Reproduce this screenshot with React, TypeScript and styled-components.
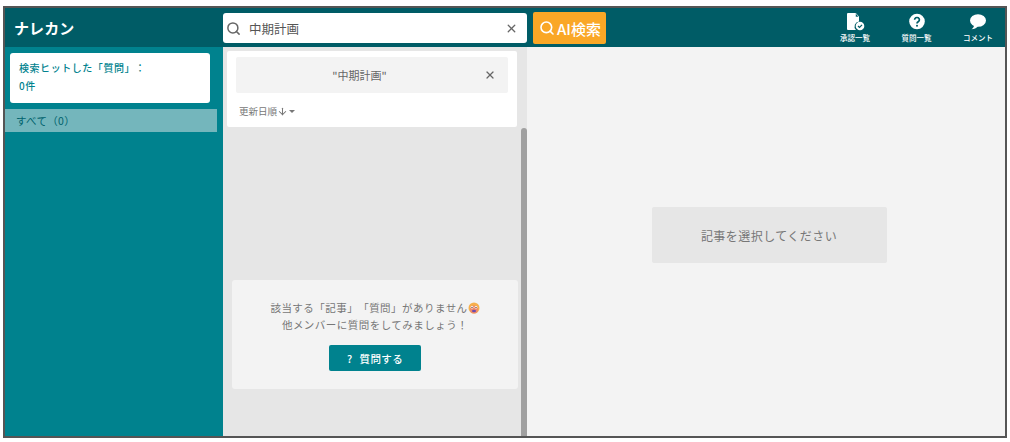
import React from "react";
import styled, { createGlobalStyle } from "styled-components";
import { Search, X, ArrowDown } from "lucide-react";

const Global = createGlobalStyle`
  html, body { margin: 0; padding: 0; background: #fff; }
  body { font-family: "Noto Sans CJK JP", "Noto Sans", sans-serif; text-spacing-trim: space-all; }
  * { box-sizing: border-box; }
`;

const Page = styled.div`
  width: 1010px;
  height: 442px;
  padding: 6px 3px 4px 3px;
  background: #fff;
`;

const Frame = styled.div`
  width: 100%;
  height: 100%;
  border: 2px solid #555;
  display: flex;
  flex-direction: column;
  overflow: hidden;
`;

const Header = styled.header`
  height: 39px;
  flex: none;
  background: #005c66;
  display: flex;
  align-items: center;
`;

const Logo = styled.div`
  width: 218px;
  padding-left: 9px;
  color: #fff;
  font-size: 15px;
  font-weight: 700;
  letter-spacing: 0.1px;
`;

const SearchBox = styled.div`
  width: 304px;
  height: 30px;
  margin-top: 1px;
  background: #fff;
  border-radius: 3px;
  display: flex;
  align-items: center;
  padding: 0 9px 0 3px;
  color: #666;
`;

const SearchText = styled.span`
  flex: 1;
  margin-left: 8px;
  font-size: 12.5px;
  color: #555;
`;

const AiButton = styled.button`
  width: 73px;
  height: 32px;
  margin: 1px 0 0 6px;
  padding: 0 0 0 6px;
  border: none;
  border-radius: 2px;
  background: #faa726;
  color: #fff;
  font-family: inherit;
  font-size: 15px;
  font-weight: 500;
  display: flex;
  align-items: center;
  gap: 2px;
  white-space: nowrap;
`;

const Nav = styled.nav`
  margin-left: auto;
  display: flex;
  gap: 21.5px;
  padding-right: 7px;
`;

const NavItem = styled.div`
  width: 40px;
  height: 39px;
  display: flex;
  flex-direction: column;
  align-items: center;
  justify-content: flex-end;
  color: #fff;
  font-size: 7.5px;
  font-weight: 500;
  line-height: 10px;
  padding-bottom: 4px;
  gap: 2px;
  white-space: nowrap;
`;

const NavIcon = styled.svg`
  width: 20px;
  height: 18px;
  display: block;
`;

const Body = styled.div`
  flex: 1;
  min-height: 0;
  display: flex;
`;

const Sidebar = styled.aside`
  width: 218px;
  flex: none;
  background: #00828e;
  padding-top: 6px;
`;

const HitCard = styled.div`
  width: 200px;
  height: 50px;
  margin-left: 5px;
  padding: 6px 9px;
  background: #fff;
  border-radius: 3px;
  color: #00828e;
  font-size: 10px;
  font-weight: 500;
  line-height: 17.500px;
  letter-spacing: 0.55px;
`;

const CategoryRow = styled.div`
  width: 212px;
  height: 23px;
  margin-top: 6px;
  padding-left: 11px;
  background: #74b6bc;
  color: #00626c;
  font-size: 10.5px;
  line-height: 23px;
  letter-spacing: 0.3px;
`;

const Middle = styled.section`
  width: 304px;
  flex: none;
  background: #e6e6e6;
  display: flex;
`;

const MiddleColumn = styled.div`
  width: 298px;
  padding: 4px 0 0 4px;
  display: flex;
  flex-direction: column;
`;

const FilterCard = styled.div`
  width: 290px;
  height: 76px;
  background: #fff;
  border-radius: 2px;
  padding: 6px 9px 0;
`;

const Chip = styled.div`
  height: 36px;
  padding-right: 25px;
  background: #f3f3f3;
  border-radius: 2px;
  display: flex;
  align-items: center;
  justify-content: center;
  position: relative;
  font-size: 11px;
  color: #666;
`;

const ChipClose = styled.span`
  position: absolute;
  right: 12px;
  top: 12px;
  display: flex;
  color: #666;
`;

const Sort = styled.div`
  margin-top: 11px;
  margin-left: 3px;
  display: flex;
  align-items: center;
  color: #777;
  font-size: 9.5px;
  line-height: 14px;
`;

const Caret = styled.span`
  width: 0;
  height: 0;
  margin-left: 1px;
  border-left: 3.500px solid transparent;
  border-right: 3.500px solid transparent;
  border-top: 3.500px solid #777;
`;

const EmptyCard = styled.div`
  width: 286px;
  height: 109px;
  margin: 153px 0 0 5px;
  background: #f3f3f3;
  border-radius: 3px;
  padding-top: 19px;
  display: flex;
  flex-direction: column;
  align-items: center;
  color: #777;
  font-size: 10.5px;
  line-height: 17px;
  letter-spacing: 0.47px;
`;

const EmptyLine = styled.div`
  display: flex;
  align-items: center;
  white-space: nowrap;
`;

const Emoji = styled.svg`
  width: 12px;
  height: 12px;
  flex: none;
`;

const AskButton = styled.button`
  width: 92px;
  height: 26px;
  margin-top: 12px;
  border: none;
  border-radius: 2px;
  background: #00828e;
  color: #fff;
  font-family: inherit;
  font-size: 10.5px;
  font-weight: 500;
  letter-spacing: 0.4px;
  display: flex;
  align-items: center;
  justify-content: center;
  gap: 7px;
`;

const ScrollTrack = styled.div`
  width: 6px;
  padding-top: 81px;
  display: flex;
`;

const ScrollThumb = styled.div`
  width: 6px;
  flex: 1;
  background: #a0a0a0;
  border-radius: 3px 3px 0 0;
`;

const Detail = styled.main`
  flex: 1;
  background: #f3f3f3;
  display: flex;
  justify-content: center;
  padding: 160px 0 0 6px;
`;

const Placeholder = styled.div`
  width: 235px;
  height: 56px;
  background: #e6e6e6;
  border-radius: 2px;
  display: flex;
  align-items: center;
  justify-content: center;
  color: #777;
  font-size: 12px;
  letter-spacing: 0.45px;
`;

export default function App() {
  return (
    <>
      <Global />
      <Page>
        <Frame>
          <Header>
            <Logo>ナレカン</Logo>
            <SearchBox>
              <Search size={15} strokeWidth={2.4} />
              <SearchText>中期計画</SearchText>
              <X size={13} strokeWidth={2.4} />
            </SearchBox>
            <AiButton>
              <Search size={16} strokeWidth={2.4} />
              AI検索
            </AiButton>
            <Nav>
              <NavItem>
                <NavIcon viewBox="0 0 20 18">
                  <path d="M3 0h7l4 4v4.500a5 5 0 0 0-3 8.500H3a1 1 0 0 1-1-1V1a1 1 0 0 1 1-1z" fill="#fff" />
                  <path d="M10.500 0v4h3.500z" fill="#005c66" stroke="#fff" strokeWidth="0.6" />
                  <circle cx="15" cy="13" r="4.300" fill="#fff" />
                  <path d="M13 13l1.500 1.500 2.500-2.700" fill="none" stroke="#005c66" strokeWidth="1.200" />
                </NavIcon>
                承認一覧
              </NavItem>
              <NavItem>
                <NavIcon viewBox="0 0 20 18">
                  <circle cx="10" cy="8.500" r="7.800" fill="#fff" />
                  <path d="M7.600 6.800a2.400 2.300 0 1 1 3.600 2c-.8.500-1.200.9-1.200 1.700" fill="none" stroke="#005c66" strokeWidth="1.700" />
                  <circle cx="10" cy="12.800" r="1" fill="#005c66" />
                </NavIcon>
                質問一覧
              </NavItem>
              <NavItem>
                <NavIcon viewBox="0 0 20 18">
                  <ellipse cx="10" cy="7.500" rx="8" ry="6.300" fill="#fff" />
                  <path d="M6 12c0 2-1 3.500-2.500 4.300 2.500 0 5-1 6.500-3z" fill="#fff" />
                </NavIcon>
                コメント
              </NavItem>
            </Nav>
          </Header>
          <Body>
            <Sidebar>
              <HitCard>
                検索ヒットした「質問」：
                <br />
                0件
              </HitCard>
              <CategoryRow>すべて（0）</CategoryRow>
            </Sidebar>
            <Middle>
              <MiddleColumn>
                <FilterCard>
                  <Chip>
                    "中期計画"
                    <ChipClose>
                      <X size={12} strokeWidth={2.4} />
                    </ChipClose>
                  </Chip>
                  <Sort>
                    更新日順
                    <ArrowDown size={11} strokeWidth={2.2} />
                    <Caret />
                  </Sort>
                </FilterCard>
                <EmptyCard>
                  <EmptyLine>
                    該当する「記事」「質問」がありません
                    <Emoji viewBox="0 0 12 12">
                      <circle cx="6" cy="6" r="5.500" fill="#f6b04c" />
                      <circle cx="6" cy="7.500" r="4" fill="#ee8a6a" />
                      <circle cx="4" cy="5.200" r="1.300" fill="#fff" />
                      <circle cx="8" cy="5.200" r="1.300" fill="#fff" />
                      <circle cx="4" cy="5.400" r=".7" fill="#5b3a2a" />
                      <circle cx="8" cy="5.400" r=".7" fill="#5b3a2a" />
                      <ellipse cx="6" cy="9" rx="2" ry="1.300" fill="#6a4bb0" />
                    </Emoji>
                  </EmptyLine>
                  <EmptyLine>他メンバーに質問をしてみましょう！</EmptyLine>
                  <AskButton>
                    <span>?</span>
                    質問する
                  </AskButton>
                </EmptyCard>
              </MiddleColumn>
              <ScrollTrack>
                <ScrollThumb />
              </ScrollTrack>
            </Middle>
            <Detail>
              <Placeholder>記事を選択してください</Placeholder>
            </Detail>
          </Body>
        </Frame>
      </Page>
    </>
  );
}
